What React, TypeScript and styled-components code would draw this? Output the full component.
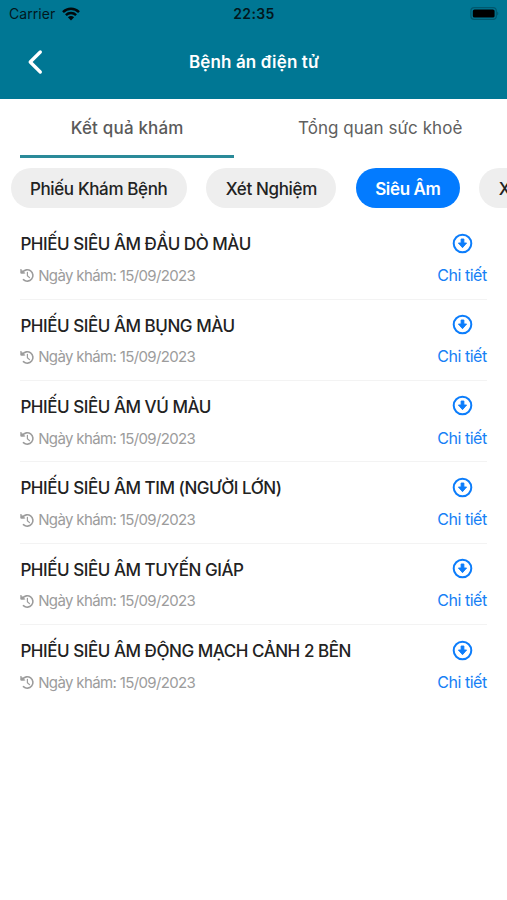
import React from 'react';
import styled, { createGlobalStyle } from 'styled-components';

const GlobalStyle = createGlobalStyle`
  * { box-sizing: border-box; }
  body {
    margin: 0;
    background: #fff;
    font-family: "Inter", "Liberation Sans", sans-serif;
    overflow: hidden;
  }
  button { font: inherit; border: 0; background: none; padding: 0; margin: 0; }
  svg { display: block; flex: none; }
`;

const Screen = styled.main`
  width: 507px;
  height: 900px;
  overflow: hidden;
  background: #fff;
`;

const Header = styled.header`
  height: 98.5px;
  background: #007794;
`;

const StatusBar = styled.div`
  display: grid;
  grid-template-columns: 1fr auto 1fr;
  align-items: center;
  height: 27px;
  padding: 0 8px 0 9px;
  font-size: 14px;
  line-height: 20px;
  color: #02171d;
`;

const Carrier = styled.div`
  display: flex;
  align-items: center;
  gap: 6.8px;
  letter-spacing: 0.06px;
`;

const Clock = styled.time`
  font-weight: 600;
  letter-spacing: 0.42px;
`;

const BatterySlot = styled.div`
  display: flex;
  justify-content: flex-end;
`;

const NavBar = styled.nav`
  display: grid;
  grid-template-columns: 60px 1fr 60px;
  align-items: center;
  height: 70px;
`;

const BackButton = styled.button`
  padding-left: 27px;
`;

const NavTitle = styled.h1`
  margin: 0;
  padding-left: 1px;
  text-align: center;
  font-size: 17px;
  line-height: 24px;
  font-weight: 600;
  letter-spacing: 0.14px;
  color: #fff;
`;

const Tabs = styled.div`
  display: grid;
  grid-template-columns: 1fr 1fr;
  height: 59px;
`;

const Tab = styled.button<{ $active?: boolean }>`
  display: flex;
  flex-direction: column;
  justify-content: space-between;
  padding: 17px ${p => (p.$active ? '19.5px' : '20.5px')} 0 20.4px;
  text-align: center;
  font-size: 17px;
  line-height: 24px;
  font-weight: ${p => (p.$active ? 500 : 400)};
  letter-spacing: ${p => (p.$active ? '0.18px' : '0.06px')};
  color: ${p => (p.$active ? '#5a5a5a' : '#606060')};

  &::after {
    content: '';
    height: 3px;
    background: ${p => (p.$active ? '#2a8a99' : 'transparent')};
  }
`;

const TabLabel = styled.span`
  align-self: center;
`;

const Chips = styled.div`
  display: flex;
  gap: 19.5px;
  padding: 10px 0 0 10.5px;
  height: 60.8px;
  overflow: hidden;
`;

const Chip = styled.button<{ $active?: boolean }>`
  flex: none;
  height: 40.5px;
  padding: 2px 19.4px 0 19.4px;
  border-radius: 20.3px;
  white-space: nowrap;
  font-size: 17px;
  font-weight: ${p => (p.$active ? 600 : 500)};
  letter-spacing: -0.36px;
  background: ${p => (p.$active ? '#037bff' : '#eeeeee')};
  color: ${p => (p.$active ? '#fff' : '#222')};
`;

const List = styled.ul`
  list-style: none;
  margin: 0;
  padding: 0 20px 0 20.4px;
`;

const Row = styled.li`
  display: flex;
  justify-content: space-between;
  height: 81.4px;
  padding-top: 14px;
  border-bottom: 1px solid #f3f3f3;

  &:last-child { border-bottom-color: transparent; }
`;

const Summary = styled.div`
  display: flex;
  flex-direction: column;
  gap: 7.6px;
`;

const RowTitle = styled.h2`
  margin: 0;
  font-size: 17px;
  line-height: 24px;
  font-weight: 500;
  letter-spacing: -0.46px;
  white-space: nowrap;
  color: #222;
`;

const Meta = styled.div`
  display: flex;
  align-items: center;
  gap: 2.8px;
  font-size: 15px;
  line-height: 24px;
  letter-spacing: -0.64px;
  color: #9c9c9c;
`;

const Actions = styled.div`
  display: flex;
  flex-direction: column;
  align-items: center;
  width: 50px;
  gap: 9.2px;
  padding-top: 0.3px;
`;

const DetailLink = styled.a`
  font-size: 16px;
  line-height: 24px;
  letter-spacing: -0.48px;
  white-space: nowrap;
  color: #1680f5;
`;

const WifiIcon = () => (
  <svg width="18" height="14" viewBox="0 0 18 14" fill="none" stroke="#02090b" strokeWidth="2.5">
    <path d="M1 5.1C5.5 0.7 12.5 0.7 17 5.1" />
    <path d="M3.9 8.2C6.8 5.4 11.2 5.4 14.1 8.2" />
    <path d="M9 13.4L5.9 10.3C7.6 8.7 10.4 8.7 12.1 10.3Z" fill="#02090b" stroke="none" />
  </svg>
);

const BatteryIcon = () => (
  <svg width="29" height="13" viewBox="0 0 29 13">
    <rect x="0.9" y="0.7" width="25.4" height="11.6" rx="3.3" fill="none" stroke="#00586e" strokeWidth="1.2" />
    <rect x="2.8" y="2.4" width="21.8" height="8.2" rx="1.7" fill="#000" />
    <path d="M27.2 4.5C28.7 5 28.7 8 27.2 8.5Z" fill="#00586e" />
  </svg>
);

const BackIcon = () => (
  <svg width="17" height="26" viewBox="0 0 17 26" fill="none" stroke="#fff" strokeWidth="3.3" strokeLinecap="round" strokeLinejoin="round">
    <path d="M13.3 3L3.2 13L13.3 23" />
  </svg>
);

const HistoryIcon = () => (
  <svg width="15" height="15" viewBox="0 0 15 15" fill="none" stroke="#9c9c9c" strokeWidth="1.6" strokeLinecap="round" strokeLinejoin="round">
    <path d="M2.5 4.3A5.7 5.7 0 1 1 3.4 11.7" />
    <path d="M0.8 1.6V5.2H4.4Z" fill="#9c9c9c" strokeWidth="0.9" />
    <path d="M7.4 4.3V7.7L9.5 9.6" strokeWidth="1.2" />
  </svg>
);

const DownloadIcon = () => (
  <svg width="21" height="21" viewBox="0 0 21 21">
    <circle cx="10.5" cy="10.5" r="8.8" fill="none" stroke="#0c7dfb" strokeWidth="2" />
    <path
      d="M9.1 6H11.9V10H14.6L10.5 14.7L6.4 10H9.1Z"
      fill="#0c7dfb"
      stroke="#0c7dfb"
      strokeWidth="0.9"
      strokeLinejoin="round"
    />
  </svg>
);

const categories = ['Phiếu Khám Bệnh', 'Xét Nghiệm', 'Siêu Âm', 'X-Quang'];

const records = [
  'PHIẾU SIÊU ÂM ĐẦU DÒ MÀU',
  'PHIẾU SIÊU ÂM BỤNG MÀU',
  'PHIẾU SIÊU ÂM VÚ MÀU',
  'PHIẾU SIÊU ÂM TIM (NGƯỜI LỚN)',
  'PHIẾU SIÊU ÂM TUYẾN GIÁP',
  'PHIẾU SIÊU ÂM ĐỘNG MẠCH CẢNH 2 BÊN',
];

export default function App() {
  return (
    <Screen>
      <GlobalStyle />
      <Header>
        <StatusBar>
          <Carrier>
            Carrier
            <WifiIcon />
          </Carrier>
          <Clock>22:35</Clock>
          <BatterySlot>
            <BatteryIcon />
          </BatterySlot>
        </StatusBar>
        <NavBar>
          <BackButton aria-label="Quay lại">
            <BackIcon />
          </BackButton>
          <NavTitle>Bệnh án điện tử</NavTitle>
        </NavBar>
      </Header>
      <Tabs>
        <Tab $active>
          <TabLabel>Kết quả khám</TabLabel>
        </Tab>
        <Tab>
          <TabLabel>Tổng quan sức khoẻ</TabLabel>
        </Tab>
      </Tabs>
      <Chips>
        {categories.map(name => (
          <Chip key={name} $active={name === 'Siêu Âm'}>
            {name}
          </Chip>
        ))}
      </Chips>
      <List>
        {records.map(title => (
          <Row key={title}>
            <Summary>
              <RowTitle>{title}</RowTitle>
              <Meta>
                <HistoryIcon />
                Ngày khám: 15/09/2023
              </Meta>
            </Summary>
            <Actions>
              <DownloadIcon />
              <DetailLink>Chi tiết</DetailLink>
            </Actions>
          </Row>
        ))}
      </List>
    </Screen>
  );
}
